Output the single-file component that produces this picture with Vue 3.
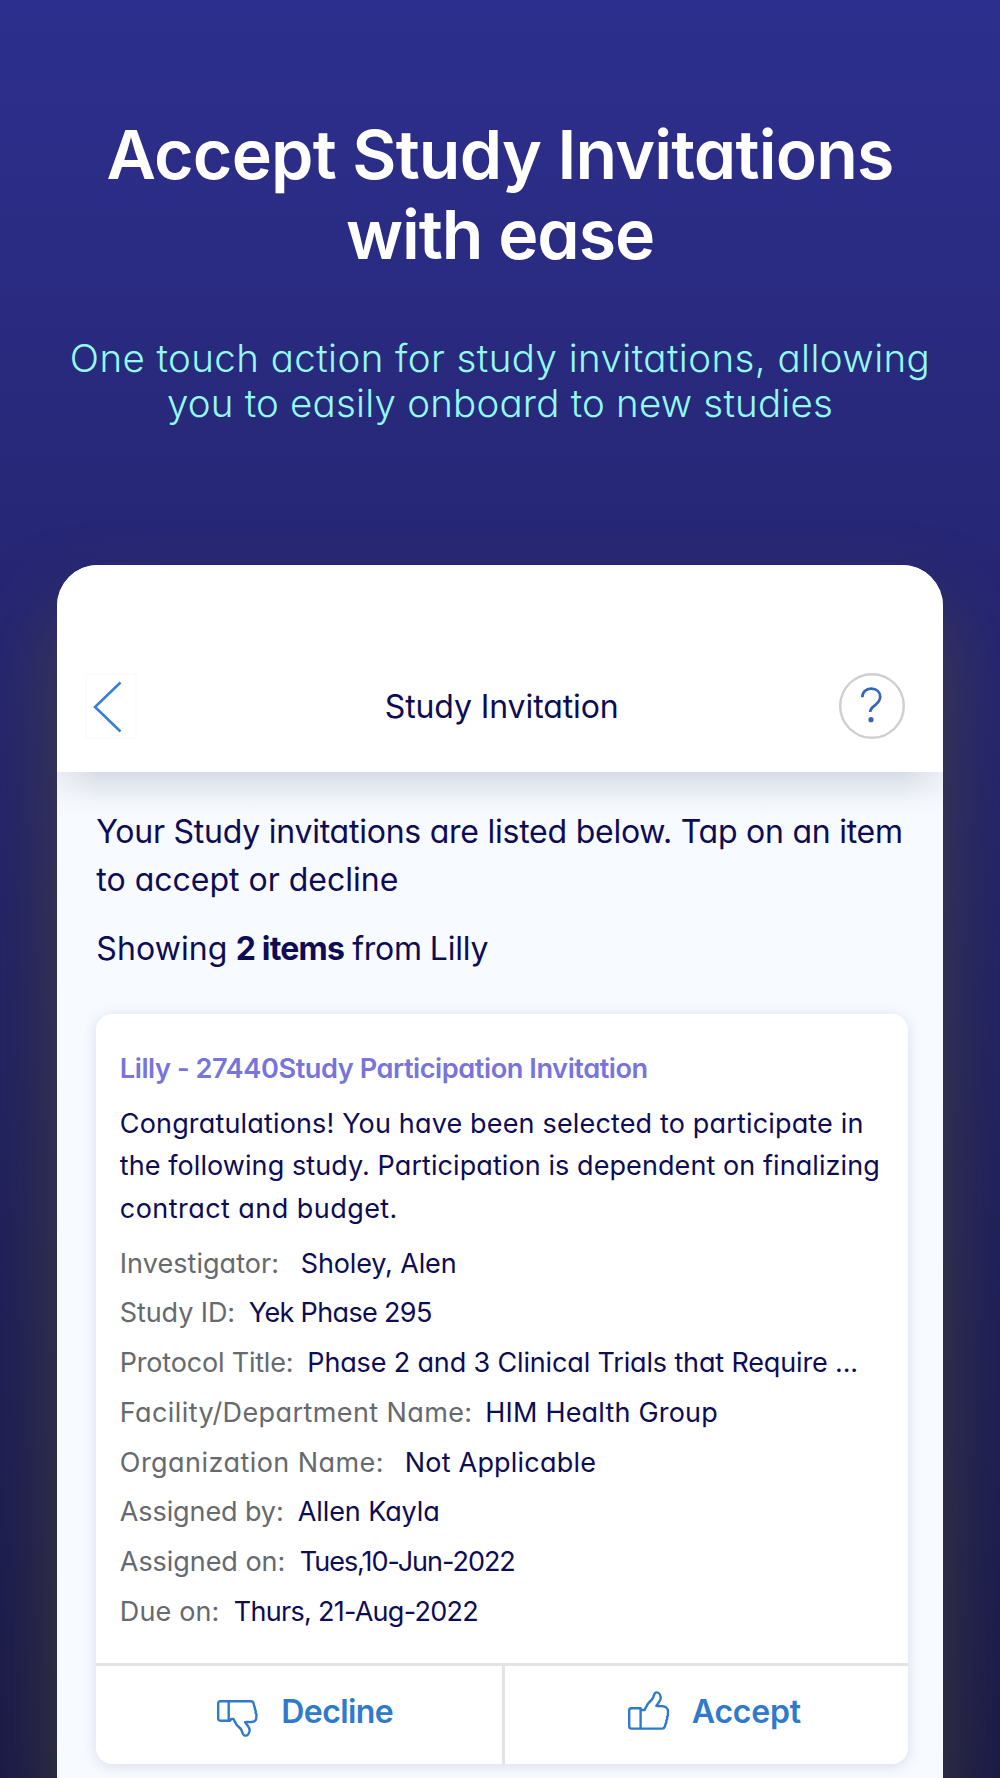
<script setup>
const headline = ['Accept Study Invitations', 'with ease']

const subline = [
  'One touch action for study invitations, allowing',
  'you to easily onboard to new studies',
]

const message = [
  'Congratulations! You have been selected to participate in',
  'the following study. Participation is dependent on finalizing',
  'contract and budget.',
]

const fields = [
  { id: 'investigator', label: 'Investigator:', value: 'Sholey, Alen' },
  { id: 'study', label: 'Study ID:', value: 'Yek Phase 295' },
  { id: 'protocol', label: 'Protocol Title:', value: 'Phase 2 and 3 Clinical Trials that Require ...' },
  { id: 'facility', label: 'Facility/Department Name:', value: 'HIM Health Group' },
  { id: 'organization', label: 'Organization Name:', value: 'Not Applicable' },
  { id: 'assigned-by', label: 'Assigned by:', value: 'Allen Kayla' },
  { id: 'assigned-on', label: 'Assigned on:', value: 'Tues,10-Jun-2022' },
  { id: 'due', label: 'Due on:', value: 'Thurs, 21-Aug-2022' },
]
</script>

<template>
  <div class="page">
    <h1 class="headline">
      <span v-for="line in headline" :key="line" class="line">{{ line }}</span>
    </h1>
    <p class="subline">
      <span v-for="line in subline" :key="line" class="line">{{ line }}</span>
    </p>

    <div class="phone">
      <!-- Top bar -->
      <header class="topbar">
        <button class="back" aria-label="Back">
          <svg width="52" height="66" viewBox="0 0 52 66" fill="none">
            <path d="M35.5 9.5L10 34L35.5 58.5" stroke="#3880d2" stroke-width="2.6" />
          </svg>
        </button>
        <h2 class="topbar-title">Study Invitation</h2>
        <button class="help" aria-label="Help">
          <svg width="66" height="66" viewBox="0 0 66 66" fill="none">
            <circle cx="33" cy="33" r="31.8" stroke="#cfcfcf" stroke-width="2.4" />
            <path
              d="M23.3 24.3C23.3 19 27 15.7 32.2 15.7C37.6 15.7 41.2 19 41.2 23.8C41.2 27.6 39 29.8 36 32.3C32.8 34.8 31.2 36 31.2 39"
              stroke="#3566bb"
              stroke-width="2.7"
            />
            <circle cx="32" cy="46.7" r="2.6" fill="#3566bb" />
          </svg>
        </button>
      </header>

      <main class="content">
        <p class="intro">
          <span class="line">Your Study invitations are listed below. Tap on an item</span>
          <span class="line">to accept or decline</span>
        </p>
        <p class="showing">Showing <strong>2 items</strong> <span class="source">from Lilly</span></p>

        <!-- Invitation card -->
        <article class="card">
          <div class="card-body">
            <h3 class="card-title">Lilly - 27440Study Participation Invitation</h3>
            <p class="message">
              <span v-for="line in message" :key="line" class="line">{{ line }}</span>
            </p>
            <div v-for="field in fields" :key="field.id" class="field" :class="field.id">
              <span class="label">{{ field.label }}</span>
              <span class="value">{{ field.value }}</span>
            </div>
          </div>

          <div class="actions">
            <button class="action decline">
              <svg width="42" height="38" viewBox="0 0 42 38" fill="none" stroke="#2f7acb" stroke-width="2.4" stroke-linejoin="round">
                <path d="M3.3 1.3H11.7V20.7H3.3Q1.2 20.7 1.2 18.7V3.3Q1.2 1.3 3.3 1.3Z" />
                <path d="M11.7 1.3H34.2Q35.8 1.3 36.5 3L37.3 6.5Q38.3 7.8 37.8 9.3Q39.3 10.7 38.5 12.7Q40 14.2 39.3 16.2C39.8 20.5 37.3 21.8 34.5 22C32 22.3 29.8 21.7 28.1 22.2C29.4 24.5 33.2 27.5 32.6 30.6C32.2 33.6 30.4 35.8 28 35.6C25.6 35.4 25.6 32.8 24.5 30.2C23.2 27.3 20.9 27 19.4 24.3C18.3 22.5 17.7 21.4 16.4 18.9H14.3L13.2 20.7H11.7" />
              </svg>
              <span>Decline</span>
            </button>
            <button class="action accept">
              <svg width="42" height="40" viewBox="0 0 42 40" fill="none" stroke="#2f7acb" stroke-width="2.4" stroke-linejoin="round">
                <path d="M3.3 17.2H12.6V37.6H3.3Q1.2 37.6 1.2 35.6V19.2Q1.2 17.2 3.3 17.2Z" />
                <path d="M12.6 37.6H34.3Q36 37.6 36.7 35.8L37.8 32.3Q38.8 31 38.3 29.4Q39.8 28 39 26.1Q40.4 24.5 39.8 22.6C40.7 18 38.5 15.8 35.2 15.3C32.5 14.8 30.4 15.6 28.3 14.9C30 12.2 33.1 9.5 32.7 6.5C32.4 3.4 30.6 1.2 28.5 1.4C26.1 1.6 26.2 4.2 25 6.8C23.8 9.6 21.6 10.3 20 12.7C18.6 15.1 17.6 16.9 16.6 19H12.6" />
              </svg>
              <span>Accept</span>
            </button>
          </div>
        </article>
      </main>
    </div>
  </div>
</template>

<style>
body {
  margin: 0;
}
</style>

<style scoped>
.page {
  box-sizing: border-box;
  display: flex;
  flex-direction: column;
  height: 1778px;
  padding-top: 115px;
  overflow: hidden;
  background: linear-gradient(#2d2f8e 0%, #28297b 24%, #262674 33%, #1a1a48 100%);
  font-family: Inter, 'Open Sans', sans-serif;
  font-feature-settings: 'cv11';
  color: #0e0c54;
}

h1,
h2,
h3,
p {
  margin: 0;
}

button {
  padding: 0;
  border: none;
  background: transparent;
  font: inherit;
  font-feature-settings: inherit;
  cursor: pointer;
}

svg {
  display: block;
}

.line {
  display: block;
  white-space: nowrap;
}

/* Headline */
.headline {
  font-size: 68px;
  font-weight: 600;
  line-height: 79.5px;
  letter-spacing: -0.8px;
  text-align: center;
  color: #fff;
}

.headline .line:last-child {
  letter-spacing: -1.1px;
}

.subline {
  margin-top: 61.5px;
  font-size: 38.5px;
  font-weight: 300;
  line-height: 45.3px;
  letter-spacing: 0.42px;
  text-align: center;
  color: #93fbf5;
}

.subline .line:last-child {
  letter-spacing: 0.2px;
}

/* Phone */
.phone {
  display: flex;
  flex: 1;
  flex-direction: column;
  margin: 138.9px 57px 0 57.3px;
  border-radius: 41px 41px 0 0;
  background: #f7faff;
  box-shadow: 0 44px 76px rgba(76, 72, 54, 0.75);
}

.topbar {
  position: relative;
  box-sizing: border-box;
  display: flex;
  align-items: center;
  justify-content: space-between;
  height: 207px;
  padding: 75px 38px 0 28px;
  border-radius: 41px 41px 0 0;
  background: #fff;
}

/* Shade under the bar, kept inside the phone's edges */
.topbar::after {
  content: '';
  position: absolute;
  top: 100%;
  left: 0;
  right: 0;
  height: 44px;
  background: linear-gradient(#d8dce5, #e6eaf1 38%, #f2f5fa 70%, #f7faff);
  -webkit-mask-image: linear-gradient(90deg, rgba(0, 0, 0, 0.4), #000 40px, #000 calc(100% - 40px), rgba(0, 0, 0, 0.4));
  mask-image: linear-gradient(90deg, rgba(0, 0, 0, 0.4), #000 40px, #000 calc(100% - 40px), rgba(0, 0, 0, 0.4));
}

.back {
  box-shadow: inset 0 0 0 2px #fcfcfc;
}

.topbar-title {
  margin-left: 27px;
  padding-top: 2px;
  font-size: 32px;
  font-weight: 400;
  line-height: 40px;
  letter-spacing: -0.1px;
}

.content {
  position: relative;
  flex: 1;
  padding: 36.5px 35px 0 39px;
  font-size: 32px;
  line-height: 48px;
}

.intro .line {
  letter-spacing: -0.24px;
}

.intro .line:last-child {
  letter-spacing: 0;
}

.showing {
  margin-top: 20.5px;
  letter-spacing: 0.1px;
  word-spacing: -1px;
}

.showing strong {
  font-weight: 700;
  letter-spacing: -0.8px;
  word-spacing: 0;
}

.source {
  letter-spacing: -0.2px;
}

/* Card */
.card {
  display: flex;
  flex-direction: column;
  height: 750px;
  margin-top: 41.3px;
  border-radius: 16px;
  background: #fff;
  box-shadow: 0 2px 14px rgba(60, 70, 110, 0.16);
}

.card-body {
  flex: 1;
  padding: 34.5px 21px 0 23.5px;
}

.card-title {
  font-size: 27.2px;
  font-weight: 600;
  line-height: 40px;
  letter-spacing: -0.45px;
  color: #7775dc;
}

.message {
  margin-top: 14px;
  margin-bottom: 7.8px;
  font-size: 27px;
  line-height: 42.7px;
  letter-spacing: 0.16px;
}

.message .line:nth-child(2) {
  letter-spacing: 0.08px;
}

.message .line:last-child {
  letter-spacing: 0.45px;
}

.field {
  display: flex;
  font-size: 27px;
  line-height: 49.75px;
  white-space: nowrap;
}

.label {
  flex: none;
  color: #66696d;
}

.investigator .label {
  width: 181px;
  letter-spacing: 0.05px;
}

.investigator .value {
  letter-spacing: -0.15px;
}

.study .label {
  width: 129px;
  letter-spacing: -0.1px;
}

.study .value {
  letter-spacing: -0.65px;
}

.protocol .label {
  width: 187.5px;
  letter-spacing: -0.2px;
}

.protocol .value {
  letter-spacing: -0.15px;
}

.facility .label {
  width: 365.5px;
  letter-spacing: 0.4px;
}

.facility .value {
  letter-spacing: 0.2px;
}

.organization .label {
  width: 285px;
  letter-spacing: 0.45px;
}

.organization .value {
  letter-spacing: 0.2px;
}

.assigned-by .label {
  width: 178px;
  letter-spacing: -0.1px;
}

.assigned-by .value {
  letter-spacing: -0.1px;
}

.assigned-on .label {
  width: 180px;
  letter-spacing: -0.05px;
}

.assigned-on .value {
  letter-spacing: -1.02px;
}

.due .label {
  width: 114px;
  letter-spacing: 0.15px;
}

.due .value {
  letter-spacing: -0.72px;
}

/* Actions */
.actions {
  display: flex;
  height: 98.5px;
  border-top: 3px solid #e4e4e4;
}

.action {
  display: flex;
  box-sizing: border-box;
  flex: 1;
  align-items: flex-start;
  font-size: 32px;
  font-weight: 600;
  line-height: 48px;
  color: #2f7acb;
}

.action span {
  margin-top: 22px;
}

.decline {
  gap: 22px;
  flex: 0 0 409px;
  padding-left: 121px;
  border-right: 3px solid #e4e4e4;
  letter-spacing: -0.6px;
}

.decline svg {
  margin-top: 34.5px;
}

.accept {
  gap: 22px;
  padding-left: 122.5px;
  letter-spacing: -0.2px;
}

.accept svg {
  margin-top: 25.5px;
}
</style>
